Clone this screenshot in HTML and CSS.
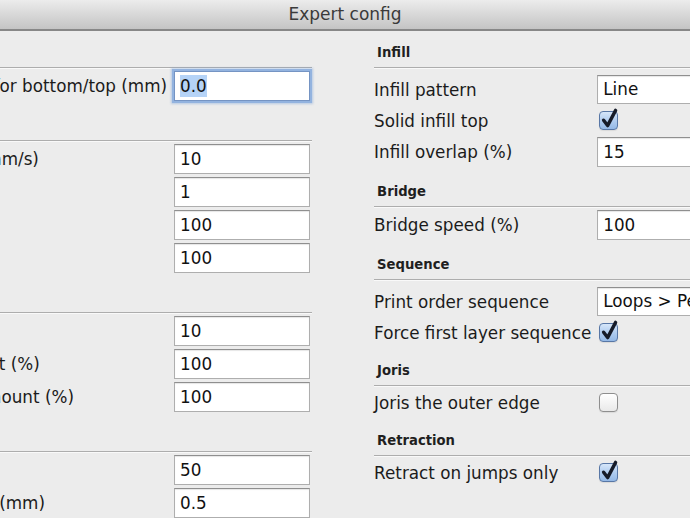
FILE: index.html
```html
<!DOCTYPE html>
<html lang="en">
<head>
<meta charset="utf-8">
<title>Expert config</title>
<link rel="stylesheet" href="styles.css">
</head>
<body>
<div class="titlebar">Expert config</div>
<main class="content">
  <section class="panel panel-left">
    <h2 class="section-title first">Accuracy</h2>
    <span class="label">Extra Wall thickness for bottom/top (mm)</span>
    <div class="field focused"><span class="sel">0.0</span></div>

    <h2 class="section-title">Cool</h2>
    <span class="label">Minimum feedrate (mm/s)</span>
    <div class="field">10</div>
    <span class="label">Fan on layer number</span>
    <div class="field">1</div>
    <span class="label">Fan speed min (%)</span>
    <div class="field">100</div>
    <span class="label">Fan speed max (%)</span>
    <div class="field">100</div>

    <h2 class="section-title">Raft (if enabled)</h2>
    <span class="label">Extra margin (mm)</span>
    <div class="field">10</div>
    <span class="label">Base material amount (<span class="pct">%</span>)</span>
    <div class="field">100</div>
    <span class="label">Interface material amount (<span class="pct">%</span>)</span>
    <div class="field">100</div>

    <h2 class="section-title">Support</h2>
    <span class="label">Material amount (<span class="pct">%</span>)</span>
    <div class="field">50</div>
    <span class="label">Distance from object (mm)</span>
    <div class="field">0.5</div>
  </section>

  <section class="panel panel-right">
    <h2 class="section-title first">Infill</h2>
    <span class="label choice-label">Infill pattern</span>
    <div class="field choice">Line</div>
    <span class="label">Solid infill top</span>
    <div class="check-cell"><span class="check checked"><svg class="tick" viewBox="0 0 19 19"><path d="M4.6 9.2 L8.6 14.6 L16.6 -0.6"/></svg></span></div>
    <span class="label">Infill overlap (<span class="pct">%</span>)</span>
    <div class="field">15</div>

    <h2 class="section-title">Bridge</h2>
    <span class="label">Bridge speed (<span class="pct">%</span>)</span>
    <div class="field">100</div>

    <h2 class="section-title">Sequence</h2>
    <span class="label choice-label">Print order sequence</span>
    <div class="field choice">Loops &gt; Perimeter &gt; Infill</div>
    <span class="label">Force first layer sequence</span>
    <div class="check-cell"><span class="check checked"><svg class="tick" viewBox="0 0 19 19"><path d="M4.6 9.2 L8.6 14.6 L16.6 -0.6"/></svg></span></div>

    <h2 class="section-title">Joris</h2>
    <span class="label">Joris the outer edge</span>
    <div class="check-cell"><span class="check"></span></div>

    <h2 class="section-title">Retraction</h2>
    <span class="label">Retract on jumps only</span>
    <div class="check-cell"><span class="check checked"><svg class="tick" viewBox="0 0 19 19"><path d="M4.6 9.2 L8.6 14.6 L16.6 -0.6"/></svg></span></div>
  </section>
</main>
</body>
</html>
```

FILE: styles.css
```css
* {
  box-sizing: border-box;
}

html,
body {
  margin: 0;
  padding: 0;
}

body {
  width: 690px;
  height: 518px;
  overflow: hidden;
  background: #ececec;
  font-family: "DejaVu Sans", "Liberation Sans", sans-serif;
  font-size: 16.8px;
  color: #1b1b1b;
}

.titlebar {
  height: 31px;
  line-height: 29px;
  font-size: 17px;
  text-align: center;
  color: #3a3a3a;
  background: linear-gradient(#ececec, #d6d6d6 55%, #c4c4c4);
  border-bottom: 2px solid #878787;
}

.content {
  display: flex;
  align-items: flex-start;
  margin-left: -181px;
}

.panel {
  display: grid;
  grid-template-columns: max-content 138px;
  column-gap: 7px;
  row-gap: 3px;
}

.panel-left {
  margin-right: 62px;
}

.panel-right {
  grid-template-columns: max-content 160px;
  column-gap: 6px;
}

.section-title {
  grid-column: 1 / -1;
  height: 37px;
  margin: 0;
  padding: 13px 0 0 3px;
  font-size: 13.2px;
  font-weight: bold;
  line-height: 18px;
  color: #1f1f1f;
  border-bottom: 1px solid #adadad;
  box-shadow: 0 1px 0 #f9f9f9;
}

.label {
  align-self: center;
  white-space: nowrap;
  line-height: 20px;
}

.pct {
  letter-spacing: -3px;
  margin-right: 3px;
}

.choice-label {
  margin-top: 4px;
}

.field {
  width: 136px;
  height: 30px;
  padding: 0 5px;
  line-height: 28px;
  white-space: nowrap;
  overflow: hidden;
  color: #111;
  background: #fff;
  border: 1px solid #aeaeae;
  border-top-color: #8f8f8f;
  box-shadow: inset 0 1px 1px rgba(0, 0, 0, 0.1);
}

.choice {
  height: 29px;
  margin-top: 4px;
  line-height: 27px;
}

.focused {
  border-color: #7594c3;
  box-shadow: 0 0 0 2px #93b3df, 0 0 2px 3px rgba(120, 160, 215, 0.45);
}

.sel {
  display: inline-block;
  line-height: 22px;
  background: #b5d3f7;
}

.check-cell {
  height: 27px;
  display: flex;
  align-items: center;
  padding-left: 2px;
}

.check {
  position: relative;
  width: 19px;
  height: 19px;
  border-radius: 4px;
  border: 1px solid #8e8e8e;
  background: linear-gradient(#ffffff, #e9e9e9);
  box-shadow: 0 1px 1px rgba(0, 0, 0, 0.08);
}

.check.checked {
  border-color: #5877a6;
  background: linear-gradient(#d6e6f9, #aecbef 55%, #94b8e6);
}

.tick {
  position: absolute;
  left: -1px;
  top: -1px;
  width: 19px;
  height: 19px;
  overflow: visible;
}

.tick path {
  fill: none;
  stroke: #161b28;
  stroke-width: 3.4;
  stroke-linecap: round;
  stroke-linejoin: round;
}
```
